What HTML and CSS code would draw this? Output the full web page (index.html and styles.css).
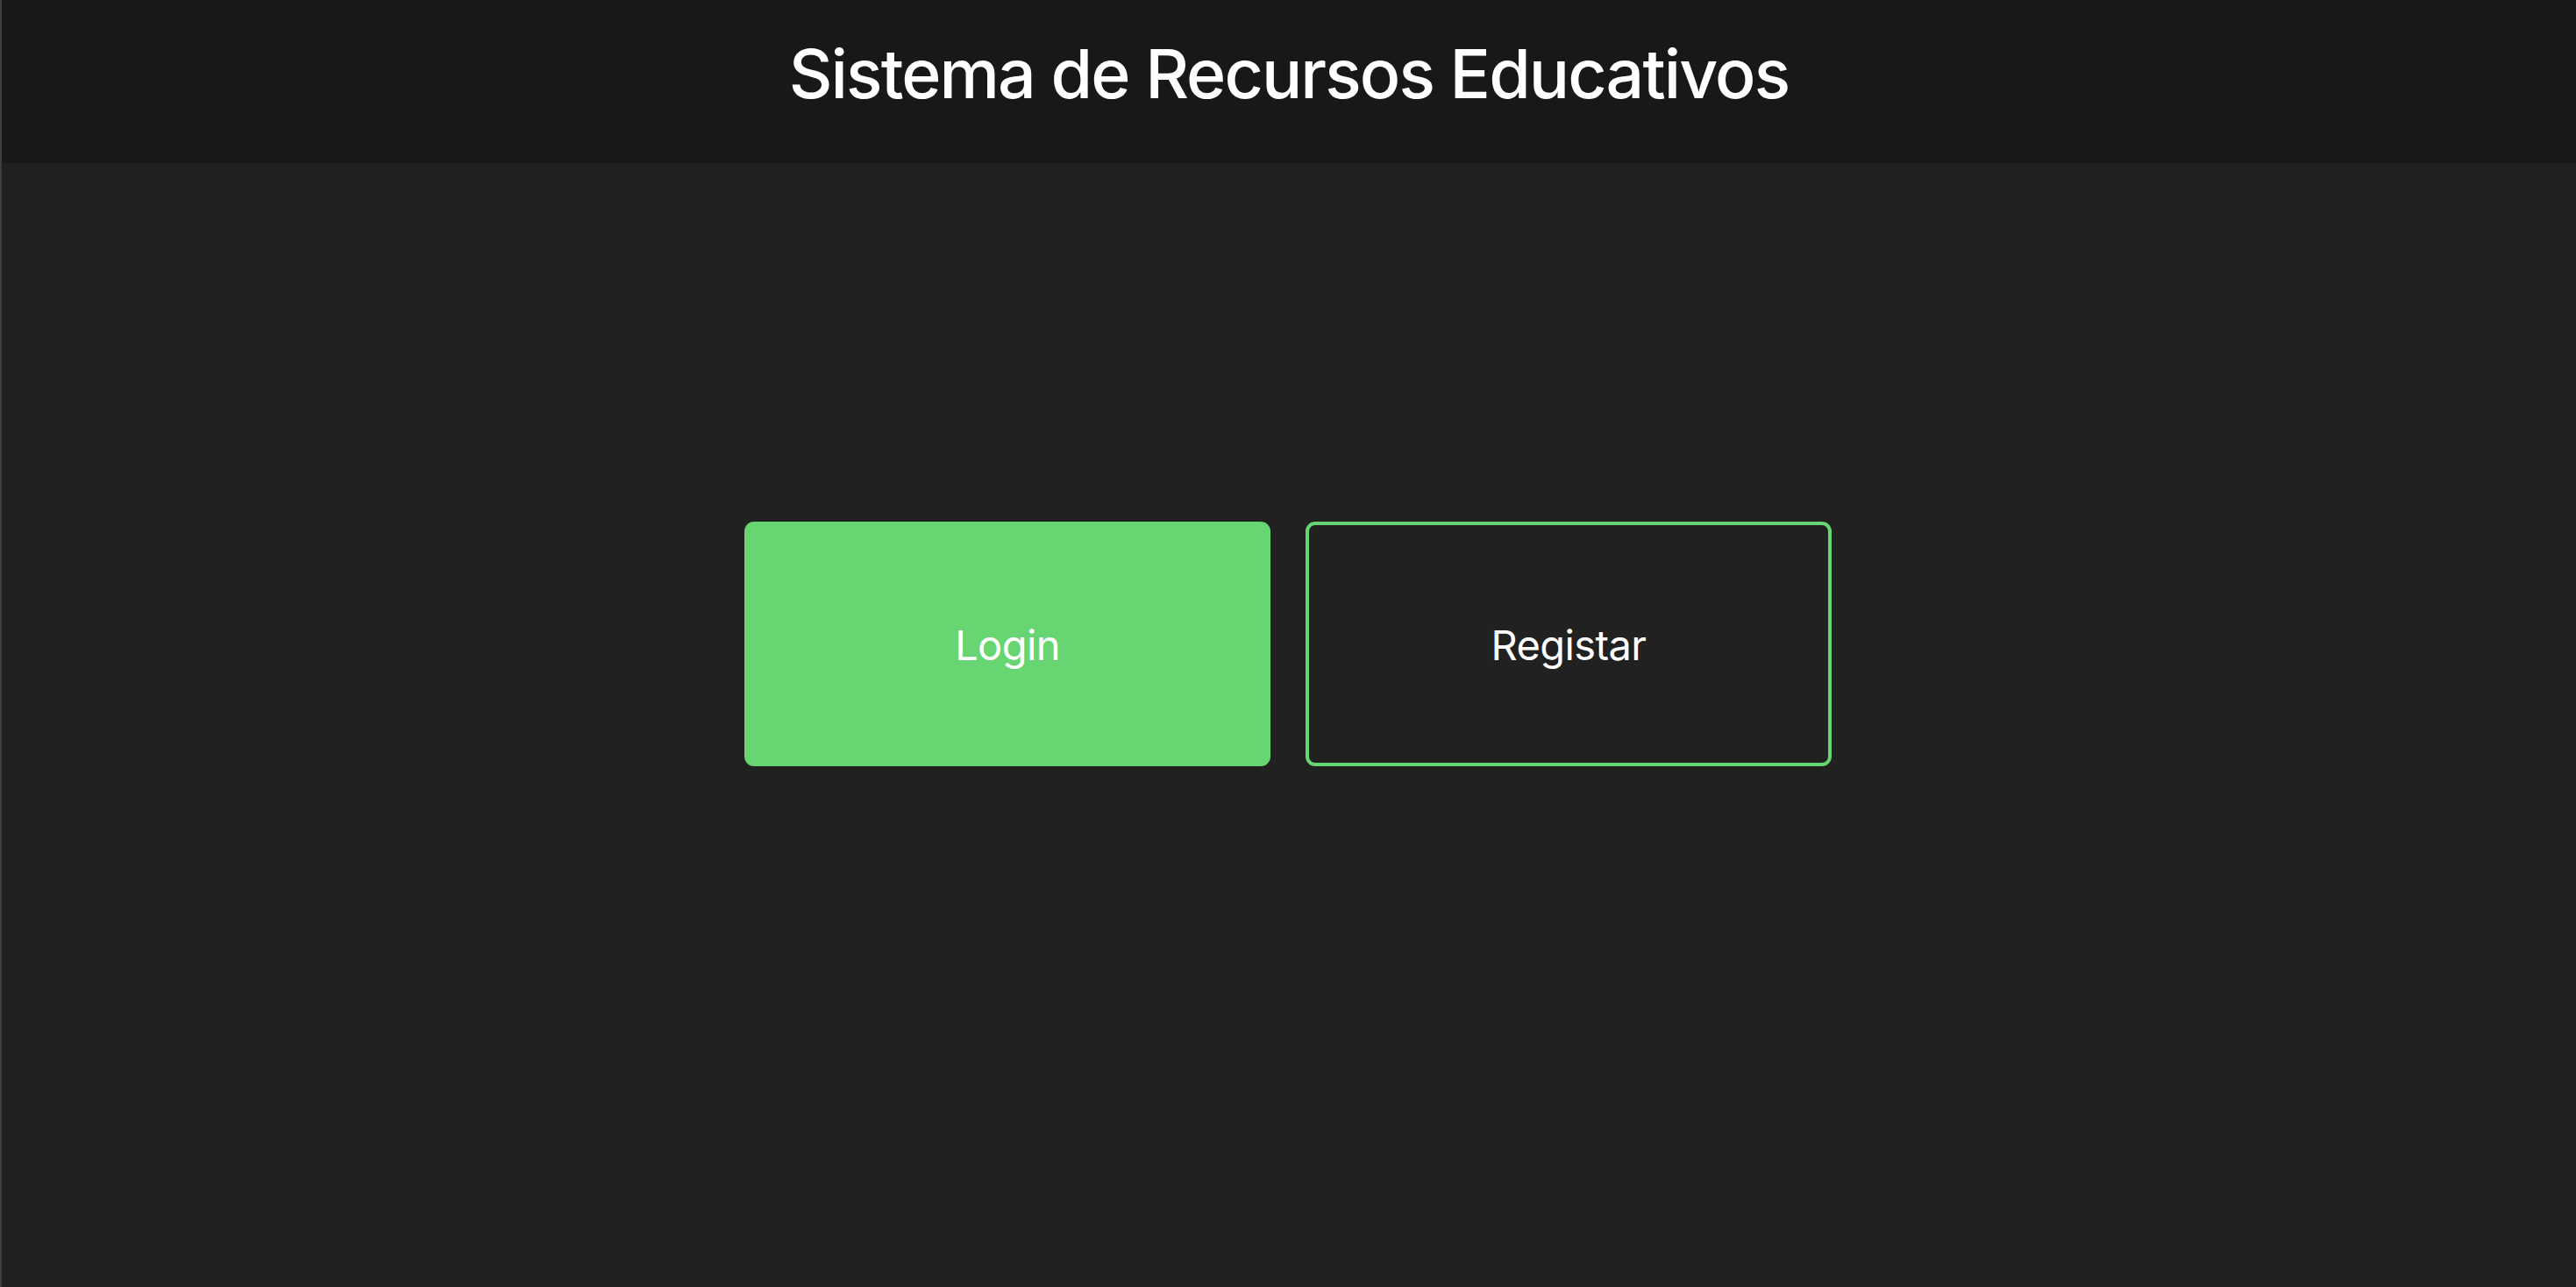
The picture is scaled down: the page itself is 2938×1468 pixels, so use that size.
FILE: index.html
```html
<!DOCTYPE html>
<html lang="pt">
<head>
<meta charset="utf-8">
<title>Sistema de Recursos Educativos</title>
<link rel="stylesheet" href="styles.css">
</head>
<body>
<div class="app">
  <header class="topbar">
    <h1 class="title">Sistema de Recursos Educativos</h1>
  </header>
  <main class="main">
    <div class="actions">
      <button class="btn btn-primary">Login</button>
      <button class="btn btn-outline">Registar</button>
    </div>
  </main>
</div>
</body>
</html>
```
FILE: styles.css
```css
html, body {
  margin: 0;
  padding: 0;
  height: 100%;
  background: #212121;
}
body {
  font-family: Inter, "Noto Sans", "Liberation Sans", sans-serif;
  color: #ffffff;
}
.app {
  height: 100vh;
  display: flex;
  flex-direction: column;
  border-left: 2px solid #3d3d3d;
  box-sizing: border-box;
}
.topbar {
  height: 186px;
  flex: 0 0 186px;
  background: #181818;
  display: flex;
  align-items: center;
  justify-content: center;
}
.title {
  margin: 0;
  font-size: 77px;
  font-weight: 500;
  letter-spacing: -1.9px;
  line-height: 1;
  position: relative;
  top: -9px;
}
.main {
  flex: 1;
  display: flex;
  align-items: center;
  justify-content: center;
  padding-bottom: 185px;
  padding-right: 2px;
}
.actions {
  display: flex;
  gap: 40px;
}
.btn {
  width: 600px;
  height: 279px;
  border-radius: 11px;
  font-family: Inter, "Noto Sans", "Liberation Sans", sans-serif;
  font-size: 47px;
  font-weight: 400;
  letter-spacing: -0.6px;
  color: #ffffff;
  cursor: pointer;
  box-sizing: border-box;
  padding-top: 3px;
}
.btn-primary {
  background: #68d573;
  border: none;
}
.btn-outline {
  background: #212121;
  border: 4px solid #68d573;
}
```
